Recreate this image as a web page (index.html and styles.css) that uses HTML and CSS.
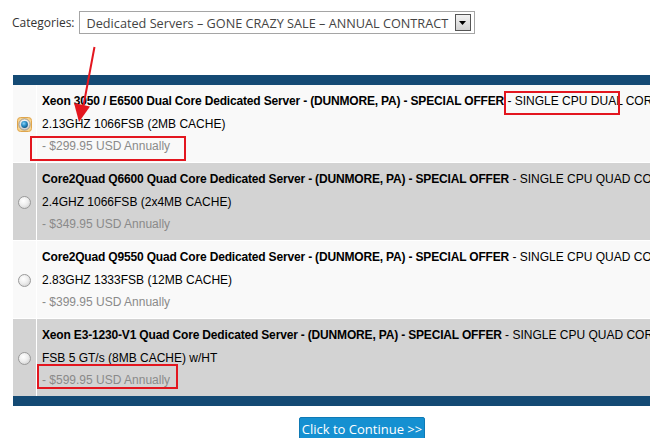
FILE: index.html
```html
<!DOCTYPE html>
<html>
<head>
<meta charset="utf-8">
<link rel="stylesheet" href="styles.css">
</head>
<body>
<div class="page">
  <div class="catbar">
    <span class="cat-label">Categories:</span>
    <div class="select">
      <span class="select-text">Dedicated Servers – GONE CRAZY SALE – ANNUAL CONTRACT</span>
      <span class="select-btn"><svg width="7" height="4" viewBox="0 0 7 4"><path d="M0 0H7L3.5 4Z" fill="#000"/></svg></span>
    </div>
  </div>

  <div class="products">
    <div class="bar"></div>
    <div class="rows">
      <div class="row light">
        <div class="radio-cell">
          <svg class="radio" width="15" height="15" viewBox="0 0 15 15">
            <defs>
              <radialGradient id="dot" cx="0.4" cy="0.35" r="0.7">
                <stop offset="0" stop-color="#8fd3f5"/>
                <stop offset="0.5" stop-color="#2a8fc9"/>
                <stop offset="1" stop-color="#0d4f7e"/>
              </radialGradient>
              <linearGradient id="ring" x1="0" y1="0" x2="0" y2="1">
                <stop offset="0" stop-color="#f7f7f7"/>
                <stop offset="1" stop-color="#c9c9c9"/>
              </linearGradient>
            </defs>
            <rect x="0.5" y="0.5" width="14" height="14" rx="3" fill="#f6d28e" stroke="#e0a54a"/>
            <circle cx="7.5" cy="7.5" r="5.6" fill="url(#ring)" stroke="#8a8a8a" stroke-width="0.8"/>
            <circle cx="7.5" cy="7.5" r="3.4" fill="url(#dot)"/>
          </svg>
        </div>
        <div class="info">
          <div class="line"><b>Xeon 3050 / E6500 Dual Core Dedicated Server - (DUNMORE, PA) - SPECIAL OFFER</b> - SINGLE CPU DUAL CORE XEON</div>
          <div class="line">2.13GHZ 1066FSB (2MB CACHE)</div>
          <div class="line price">- $299.95 USD Annually</div>
        </div>
      </div>

      <div class="row dark">
        <div class="radio-cell"><span class="radio-off"></span></div>
        <div class="info">
          <div class="line"><b>Core2Quad Q6600 Quad Core Dedicated Server - (DUNMORE, PA) - SPECIAL OFFER</b> - SINGLE CPU QUAD CORE</div>
          <div class="line">2.4GHZ 1066FSB (2x4MB CACHE)</div>
          <div class="line price">- $349.95 USD Annually</div>
        </div>
      </div>

      <div class="row light">
        <div class="radio-cell"><span class="radio-off"></span></div>
        <div class="info">
          <div class="line"><b>Core2Quad Q9550 Quad Core Dedicated Server - (DUNMORE, PA) - SPECIAL OFFER</b> - SINGLE CPU QUAD CORE</div>
          <div class="line">2.83GHZ 1333FSB (12MB CACHE)</div>
          <div class="line price">- $399.95 USD Annually</div>
        </div>
      </div>

      <div class="row dark">
        <div class="radio-cell"><span class="radio-off"></span></div>
        <div class="info">
          <div class="line"><b>Xeon E3-1230-V1 Quad Core Dedicated Server - (DUNMORE, PA) - SPECIAL OFFER</b> - SINGLE CPU QUAD CORE</div>
          <div class="line">FSB 5 GT/s (8MB CACHE) w/HT</div>
          <div class="line price">- $599.95 USD Annually</div>
        </div>
      </div>
    </div>
    <div class="bar"></div>
  </div>

  <div class="actions">
    <button class="continue">Click to Continue &gt;&gt;</button>
  </div>

  <div class="mark mark-1"></div>
  <div class="mark mark-2"></div>
  <div class="mark mark-3"></div>
  <svg class="arrow" width="650" height="438" viewBox="0 0 650 438">
    <line x1="94.5" y1="47" x2="83" y2="108" stroke="#e3161f" stroke-width="2"/>
    <path d="M74 103 L90 106.5 L79 122 Z" fill="#e3161f"/>
  </svg>
</div>
</body>
</html>
```

FILE: styles.css
```css
html, body {
  margin: 0;
  padding: 0;
  background: #ffffff;
  overflow: hidden;
}

.page {
  position: relative;
  width: 650px;
  height: 438px;
  overflow: hidden;
  font-family: "Liberation Sans", Arial, sans-serif;
  font-size: 12px;
  color: #000;
}

.catbar {
  display: flex;
  align-items: center;
  gap: 4px;
  padding: 11px 0 0 12px;
}

.cat-label {
  font-family: "Open Sans", "DejaVu Sans", sans-serif;
  font-size: 12px;
  color: #333;
}

.select {
  display: flex;
  align-items: center;
  justify-content: space-between;
  box-sizing: border-box;
  width: 396px;
  height: 23px;
  border: 1px solid #a5a5a5;
  background: #fff;
  padding: 0 3px 0 7px;
}

.select-text {
  font-family: "Open Sans", "DejaVu Sans", sans-serif;
  font-size: 12.7px;
  color: #444;
  white-space: nowrap;
}

.select-btn {
  display: flex;
  align-items: center;
  justify-content: center;
  box-sizing: border-box;
  width: 16px;
  height: 17px;
  border: 1px solid #555;
  background: linear-gradient(#f2f2f2, #d2d2d2);
}

.products {
  margin: 41px 0 0 13px;
  width: 900px;
}

.bar {
  height: 10px;
  background: #144a74;
}

.rows {
  display: flex;
  flex-direction: column;
  gap: 1px;
}

.row {
  display: flex;
  gap: 1px;
  height: 77px;
}

.row.light .radio-cell,
.row.light .info {
  background: #f9f9f9;
}

.row.dark .radio-cell,
.row.dark .info {
  background: #d3d3d3;
}

.radio-cell {
  width: 23px;
  flex: none;
  display: flex;
  align-items: center;
  justify-content: center;
  padding-top: 1px;
  box-sizing: border-box;
}

.radio-off {
  display: block;
  box-sizing: border-box;
  width: 13px;
  height: 13px;
  border-radius: 50%;
  border: 1px solid #9a9a9a;
  background: radial-gradient(circle at 40% 35%, #ffffff 0, #eeeeee 45%, #c8c8c8 100%);
}

.info {
  flex: 1;
  padding: 5px 0 0 5px;
  line-height: 22.5px;
  white-space: nowrap;
}

.line b {
  font-weight: bold;
  letter-spacing: -0.17px;
}

.price {
  color: #8a8a8a;
}

.actions {
  display: flex;
  justify-content: center;
  padding: 11px 0 0 74px;
}

.continue {
  font-family: "Open Sans", "DejaVu Sans", sans-serif;
  font-size: 13px;
  color: #fff;
  background: #1590d1;
  border: 1px solid #0f7ab5;
  border-radius: 2px;
  height: 23px;
  padding: 0 2px;
  line-height: 20px;
}

.mark {
  position: absolute;
  border: 2px solid #e3161f;
  box-sizing: border-box;
}

.mark-1 {
  left: 504px;
  top: 91px;
  width: 116px;
  height: 24px;
}

.mark-2 {
  left: 30px;
  top: 136px;
  width: 156px;
  height: 25px;
}

.mark-3 {
  left: 37px;
  top: 364px;
  width: 141px;
  height: 25px;
}

.arrow {
  position: absolute;
  left: 0;
  top: 0;
  pointer-events: none;
}
```
